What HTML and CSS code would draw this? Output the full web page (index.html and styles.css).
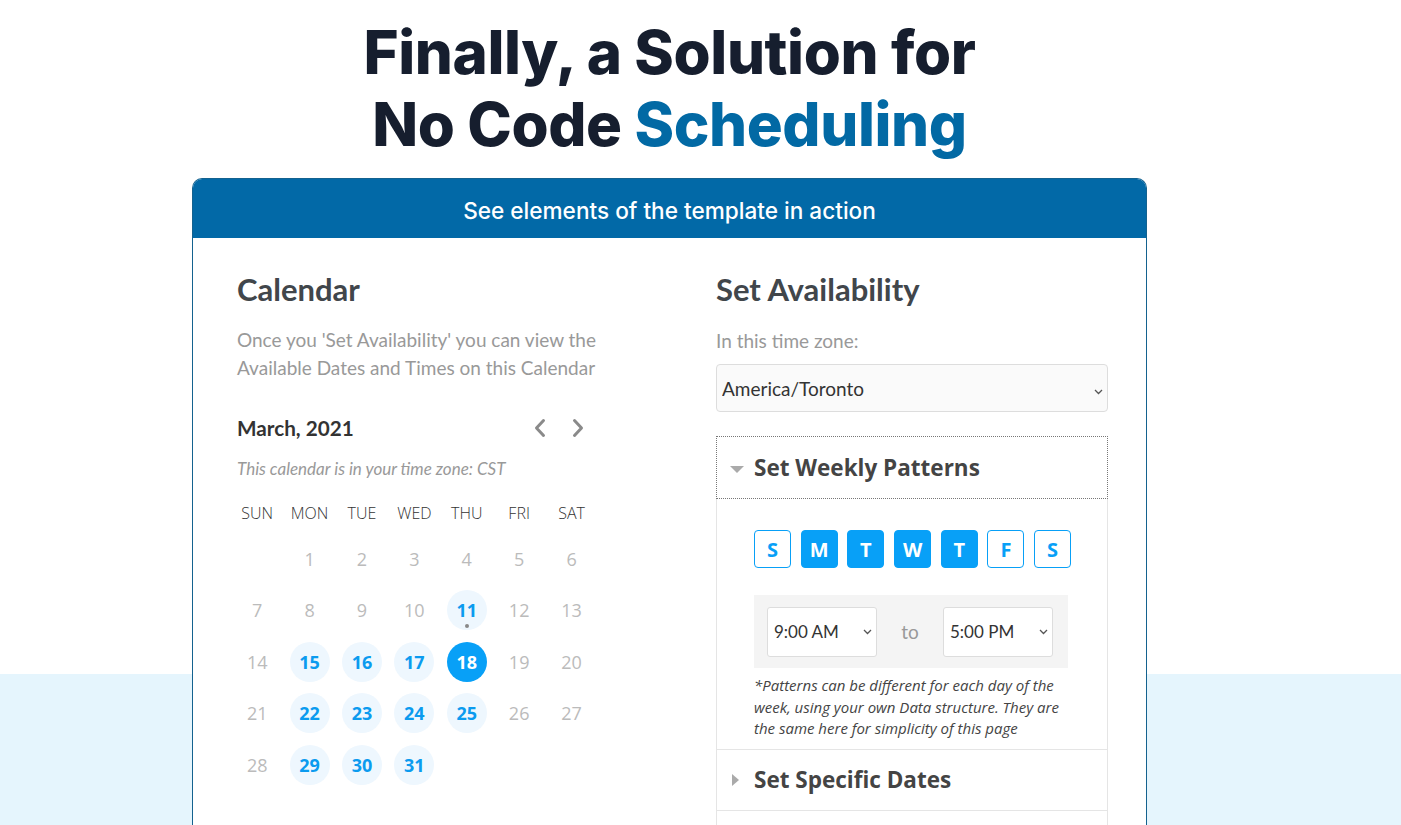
FILE: index.html
```html
<!DOCTYPE html>
<html lang="en">
<head>
    <meta charset="UTF-8">
    <meta name="viewport" content="width=device-width, initial-scale=1.0">
    <title>No Code Scheduling</title>
    <link rel="stylesheet" href="styles.css">
</head>
<body>

    <div class="page">
        <h1 class="hero">Finally, a Solution for<br>No Code <span class="accent">Scheduling</span></h1>

        <div class="card">
            <div class="card-header">See elements of the template in action</div>

            <div class="card-body">
                <!-- Calendar column -->
                <div class="col-calendar">
                    <h2>Calendar</h2>
                    <p class="muted">Once you 'Set Availability' you can view the Available Dates and Times on this Calendar</p>

                    <div class="calendar">
                        <div class="cal-top">
                            <span class="cal-month">March, 2021</span>
                            <span class="cal-nav">
                                <svg width="16" height="22" viewBox="0 0 16 22"><path d="M11.5 3.5 L4.5 11 L11.5 18.5" fill="none" stroke="#8a8a8a" stroke-width="3" stroke-linecap="round" stroke-linejoin="round"/></svg>
                                <svg width="16" height="22" viewBox="0 0 16 22"><path d="M4.5 3.5 L11.5 11 L4.5 18.5" fill="none" stroke="#8a8a8a" stroke-width="3" stroke-linecap="round" stroke-linejoin="round"/></svg>
                            </span>
                        </div>
                        <p class="cal-tz">This calendar is in your time zone: CST</p>

                        <div class="cal-grid">
                            <div class="wd">SUN</div><div class="wd">MON</div><div class="wd">TUE</div><div class="wd">WED</div><div class="wd">THU</div><div class="wd">FRI</div><div class="wd">SAT</div>

                            <div class="day"></div>
                            <div class="day"><span>1</span></div>
                            <div class="day"><span>2</span></div>
                            <div class="day"><span>3</span></div>
                            <div class="day"><span>4</span></div>
                            <div class="day"><span>5</span></div>
                            <div class="day"><span>6</span></div>

                            <div class="day"><span>7</span></div>
                            <div class="day"><span>8</span></div>
                            <div class="day"><span>9</span></div>
                            <div class="day"><span>10</span></div>
                            <div class="day"><span class="avail today">11</span></div>
                            <div class="day"><span>12</span></div>
                            <div class="day"><span>13</span></div>

                            <div class="day"><span>14</span></div>
                            <div class="day"><span class="avail">15</span></div>
                            <div class="day"><span class="avail">16</span></div>
                            <div class="day"><span class="avail">17</span></div>
                            <div class="day"><span class="avail selected">18</span></div>
                            <div class="day"><span>19</span></div>
                            <div class="day"><span>20</span></div>

                            <div class="day"><span>21</span></div>
                            <div class="day"><span class="avail">22</span></div>
                            <div class="day"><span class="avail">23</span></div>
                            <div class="day"><span class="avail">24</span></div>
                            <div class="day"><span class="avail">25</span></div>
                            <div class="day"><span>26</span></div>
                            <div class="day"><span>27</span></div>

                            <div class="day"><span>28</span></div>
                            <div class="day"><span class="avail">29</span></div>
                            <div class="day"><span class="avail">30</span></div>
                            <div class="day"><span class="avail">31</span></div>
                        </div>
                    </div>
                </div>

                <!-- Availability column -->
                <div class="col-availability">
                    <h2>Set Availability</h2>
                    <label class="muted tz-label" for="tz">In this time zone:</label>
                    <span class="select-wrap">
                        <select id="tz" class="tz-select">
                            <option>America/Toronto</option>
                        </select>
                        <svg class="chev" width="9" height="6" viewBox="0 0 9 6"><path d="M1 1 L4.5 4.5 L8 1" fill="none" stroke="#555" stroke-width="1.3"/></svg>
                    </span>

                    <div class="accordion">
                        <div class="acc-head open">
                            <span class="caret down"></span>
                            Set Weekly Patterns
                        </div>
                        <div class="acc-panel">
                            <div class="weekdays">
                                <button class="wk">S</button>
                                <button class="wk on">M</button>
                                <button class="wk on">T</button>
                                <button class="wk on">W</button>
                                <button class="wk on">T</button>
                                <button class="wk">F</button>
                                <button class="wk">S</button>
                            </div>
                            <div class="time-row">
                                <span class="select-wrap">
                                    <select class="time-select"><option>9:00 AM</option></select>
                                    <svg class="chev" width="9" height="6" viewBox="0 0 9 6"><path d="M1 1 L4.5 4.5 L8 1" fill="none" stroke="#555" stroke-width="1.3"/></svg>
                                </span>
                                <span class="to">to</span>
                                <span class="select-wrap">
                                    <select class="time-select"><option>5:00 PM</option></select>
                                    <svg class="chev" width="9" height="6" viewBox="0 0 9 6"><path d="M1 1 L4.5 4.5 L8 1" fill="none" stroke="#555" stroke-width="1.3"/></svg>
                                </span>
                            </div>
                            <p class="note">*Patterns can be different for each day of the week, using your own Data structure. They are the same here for simplicity of this page</p>
                        </div>
                        <div class="acc-head">
                            <span class="caret right"></span>
                            Set Specific Dates
                        </div>
                        <div class="acc-panel empty"></div>
                    </div>
                </div>
            </div>
        </div>
    </div>

</body>
</html>
```

FILE: styles.css
```css
body {
    margin: 0;
    font-family: "Open Sans", sans-serif;
    color: #333;
    background: linear-gradient(to bottom, #fff 674px, #e5f5fd 674px);
    min-height: 825px;
}
.page {
    width: 955px;
    margin-left: 192px;
}
.hero {
    font-family: Inter, sans-serif;
    font-weight: 800;
    font-size: 60px;
    line-height: 72px;
    letter-spacing: -0.4px;
    color: #161e2e;
    text-align: center;
    margin: 16px 0 18px;
}
.accent {
    color: #0269a4;
}
.card {
    background: #fff;
    border: 1px solid #14628f;
    border-bottom: none;
    border-radius: 10px 10px 0 0;
    overflow: hidden;
    min-height: 700px;
}
.card-header {
    background: #0269a7;
    color: #fff;
    font-family: Inter, sans-serif;
    font-weight: 500;
    font-size: 22.6px;
    height: 59px;
    line-height: 64px;
    text-align: center;
}
.card-body {
    display: grid;
    grid-template-columns: 479px 392px;
    padding: 33px 0 0 44px;
}
h2 {
    font-family: Lato, sans-serif;
    font-weight: 700;
    font-size: 31px;
    line-height: 36px;
    color: #41464b;
    margin: 0;
}
.muted {
    font-family: Lato, sans-serif;
    font-size: 19px;
    line-height: 28px;
    color: #999;
}
.col-calendar p.muted {
    margin: 19px 0 0;
    width: 375px;
}

/* calendar */
.calendar {
    width: 356px;
}
.cal-top {
    display: flex;
    justify-content: space-between;
    align-items: center;
    margin-top: 31px;
    height: 30px;
}
.cal-month {
    font-family: Lato, sans-serif;
    font-weight: 700;
    font-size: 20.7px;
    color: #333;
}
.cal-nav {
    display: flex;
    gap: 22px;
    margin-right: 7px;
}
.cal-tz {
    font-family: Lato, sans-serif;
    font-style: italic;
    font-size: 17px;
    line-height: 24px;
    color: #999;
    margin: 14px 0 0;
}
.cal-grid {
    display: grid;
    grid-template-columns: repeat(7, 52.4px);
    margin: 22px 0 0 -6px;
}
.wd {
    text-align: center;
    font-size: 16px;
    font-weight: 300;
    line-height: 20px;
    color: #333;
    height: 30px;
}
.day {
    height: 51.5px;
    display: flex;
    align-items: center;
    justify-content: center;
}
.day span {
    width: 40px;
    height: 40px;
    border-radius: 50%;
    display: flex;
    align-items: center;
    justify-content: center;
    font-size: 18px;
    color: #bbb;
    position: relative;
}
.day span.avail {
    background: #eef7fe;
    color: #0b9bef;
    font-weight: 700;
}
.day span.selected {
    background: #08a0f7;
    color: #fff;
}
.day span.today::after {
    content: "";
    position: absolute;
    bottom: 2px;
    left: 18px;
    width: 4px;
    height: 4px;
    border-radius: 50%;
    background: #888;
}

/* availability */
.tz-label {
    display: block;
    margin-top: 20px;
}
.select-wrap {
    position: relative;
    display: block;
}
.time-row .select-wrap {
    display: inline-block;
}
.chev {
    position: absolute;
    right: 5px;
    top: 50%;
    margin-top: -3px;
    pointer-events: none;
}
.tz-select {
    display: block;
    appearance: none;
    width: 392px;
    height: 48px;
    margin-top: 9px;
    padding: 0 5px;
    background: #fafafa;
    border: 1px solid #ddd;
    border-radius: 4px;
    font-family: Lato, sans-serif;
    font-size: 19px;
    color: #333;
}
.tz-select + .chev {
    margin-top: 1px;
}
.accordion {
    margin-top: 24px;
}
.acc-head {
    display: flex;
    align-items: center;
    gap: 10px;
    height: 60px;
    padding-left: 13px;
    font-size: 22.5px;
    font-weight: 700;
    color: #444;
    border-left: 1px solid #e5e5e5;
    border-right: 1px solid #e5e5e5;
    border-bottom: 1px solid #e5e5e5;
}
.acc-head.open {
    height: 61px;
    border: 1px dotted #777;
}
.caret {
    width: 0;
    height: 0;
    border-style: solid;
}
.caret.down {
    border-width: 7px 7px 0 7px;
    border-color: #aaa transparent transparent transparent;
    margin-top: 4px;
}
.caret.right {
    border-width: 6px 0 6px 7px;
    border-color: transparent transparent transparent #aaa;
    margin: 0 5px 0 2px;
}
.acc-panel {
    border-left: 1px solid #e5e5e5;
    border-right: 1px solid #e5e5e5;
    border-bottom: 1px solid #e5e5e5;
    padding: 31px 0 9px 37px;
}
.acc-panel.empty {
    height: 60px;
    padding: 0;
    border-bottom: none;
}
.weekdays {
    display: flex;
    gap: 9.7px;
}
.wk {
    width: 37px;
    height: 38px;
    padding: 0;
    border: 1px solid #08a0f7;
    border-radius: 4px;
    background: #fff;
    color: #08a0f7;
    font-family: "Open Sans", sans-serif;
    font-weight: 700;
    font-size: 20px;
}
.wk.on {
    background: #08a0f7;
    color: #fff;
}
.time-row {
    display: flex;
    align-items: center;
    width: 314px;
    height: 73px;
    margin-top: 27px;
    padding: 0 15px 0 13px;
    box-sizing: border-box;
    background: #f4f4f4;
}
.time-select {
    display: block;
    appearance: none;
    width: 110px;
    height: 50px;
    padding: 0 6px;
    background: #fff;
    border: 1px solid #ddd;
    border-radius: 3px;
    font-family: Lato, sans-serif;
    font-size: 17px;
    color: #333;
}
.to {
    flex: 1;
    text-align: center;
    font-family: Lato, sans-serif;
    font-size: 19px;
    color: #999;
}
.note {
    font-style: italic;
    font-size: 15px;
    line-height: 21.5px;
    color: #444;
    margin: 7px 0 0;
    width: 312px;
}
```
